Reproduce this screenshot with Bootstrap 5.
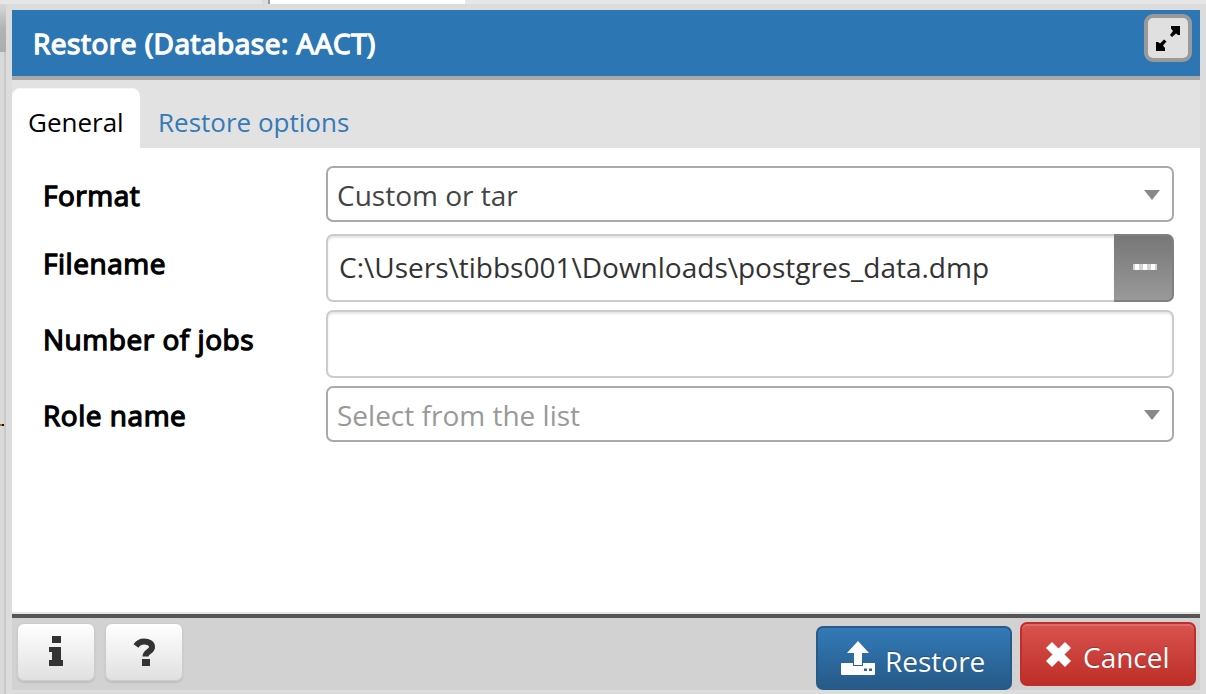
<!DOCTYPE html>
<html lang="en">
<head>
<meta charset="utf-8">
<meta name="viewport" content="width=device-width, initial-scale=1">
<title>Restore (Database: AACT)</title>
<link href="https://cdn.jsdelivr.net/npm/bootstrap@5.3.0/dist/css/bootstrap.min.css" rel="stylesheet">
<style>
body{height:694px;background:#d9d9d9;font-family:"Open Sans",sans-serif;font-size:28px;line-height:38px;color:#444}
.backstrip{height:4px;background:#e6e6e6}
.seg-a{width:262px}
.seg-b{width:8px;background:#dcdcdc;border-right:2px solid #999}
.seg-c{width:195px;background:#fff}
.gutter{width:6px;background:linear-gradient(90deg,#d9d9d9 4px,#c8c8c8 4px)}
.gutter-top{height:48px;background:linear-gradient(#d8d8d8,#b3b3b3 24px,#adadad)}
.tick{margin-top:372px;height:2px;width:4px;background:#111;border-left:2px solid #b36a1c}
.dialog{border:6px solid #dcdcdc;border-bottom-width:4px;height:690px}
.titlebar{height:70px;background:#2c76b4;border-bottom:4px solid #a9a9a9;padding:4px 8px 0 21px}
.titlebar h1{font-size:28px;line-height:58px;letter-spacing:.52px;color:#fff;-webkit-text-stroke:1.4px #fff}
.max-btn{width:48px;height:48px;border:4px solid #999;border-radius:9px;background:#e0e0e0}
.tabs{height:68px;background:#e2e2e2;padding-top:8px;font-size:26px}
.tabs .nav-link{height:60px;padding:15px 16px 0;line-height:38px;color:#337ab7;border:0}
.tabs .nav-link.active{width:128px;background:#fff;color:#000;border-radius:8px 8px 0 0;border-top:1px solid #f5f5f5;padding-top:14px}
.tabs .nav-link + .nav-link{padding-left:18px}
.pane{background:#fff;padding:18px 26px 0 31px;border-bottom:2px solid #e5e5e5}
.field-label{width:283px;padding-top:10px;color:#000;letter-spacing:.53px;-webkit-text-stroke:1.3px #000}
.box{border:2px solid #ccc;border-radius:7px;background:#fff}
.pick{height:56px;border-color:#aaa;padding:2px 12px 0 9px}
.entry{height:68px;box-shadow:inset 0 2px 2px rgba(0,0,0,.1);color:#333}
.browse{width:60px;height:68px;border:2px solid #808080;border-left:0;border-radius:0 7px 7px 0;background:linear-gradient(#777,#999)}
.file-entry{border-right:0;border-radius:7px 0 0 7px;padding:0 0 2px 11px}
.hint{color:#999}
.footbar{height:76px;background:#d2d2d2;border-top:4px solid #555;padding:4px 4px 0 5px}
.tool{width:78px;height:58px;margin:1px 10px 0 0;border:1px solid #ccc;border-radius:7px;background:linear-gradient(#fff,#e0e0e0);box-shadow:0 2px 2px rgba(0,0,0,.09)}
.act{border-radius:7px;color:#fff!important;font-size:28px;line-height:38px;text-shadow:0 -1px 1px rgba(0,0,0,.25)}
.act-restore{width:196px;height:64px;margin-top:4px;padding:6px 0 0 22px;gap:9px;border:2px solid #265a88;background:linear-gradient(#337ab7,#265a88)}
.act-cancel{width:176px;height:64px;padding:6px 0 0 23px;gap:11px;border:2px solid #c12e2a;background:linear-gradient(#d9534f,#be2e28);box-shadow:inset 0 2px 0 rgba(255,255,255,.15)}
.act svg{margin-top:-5px}
</style>
</head>
<body class="overflow-hidden">
<div class="backstrip d-flex"><div class="seg-a"></div><div class="seg-b"></div><div class="seg-c"></div></div>
<div class="d-flex">
  <div class="gutter flex-shrink-0"><div class="gutter-top"></div><div class="tick"></div></div>
  <main class="dialog d-flex flex-column flex-grow-1">
    <header class="titlebar d-flex justify-content-between align-items-start flex-shrink-0">
      <h1 class="m-0">Restore (Database: AACT)</h1>
      <button class="max-btn btn p-0 d-flex" aria-label="Maximize"><svg width="40" height="40" viewBox="0 0 40 40"><path d="M23 8h9v9h-2l-2-1.500-4 3.500-2-2 3-4-2-2.500zM8 24h2l2 1.500 4-4 2.500 2-3.500 4 2 2.500v3H8z"/></svg></button>
    </header>
    <nav class="tabs nav flex-nowrap flex-shrink-0">
      <a class="nav-link active text-nowrap">General</a>
      <a class="nav-link text-nowrap">Restore options</a>
    </nav>
    <section class="pane flex-grow-1">
      <div class="d-flex pb-1 mb-2"><div class="field-label"><span>Format</span></div>
        <div class="box pick flex-grow-1 d-flex align-items-center justify-content-between"><span>Custom or tar</span><svg width="16" height="10"><path d="M0 0h16L8 10z" fill="#888"/></svg></div></div>
      <div class="d-flex mb-2"><div class="field-label"><span>Filename</span></div>
        <div class="box entry file-entry flex-grow-1 d-flex align-items-center"><span>C:\Users\tibbs001\Downloads\postgres_data.dmp</span></div>
        <button class="browse btn p-0 d-flex align-items-center justify-content-center" aria-label="Browse"><svg class="ms-1" width="24" height="8"><path d="M0 0h24v6H0z" fill="#d4d4d4"/><path d="M2 0h4v6H2zM10 0h4v6h-4zM18 0h4v6h-4z" fill="#fff"/></svg></button></div>
      <div class="d-flex mb-2"><div class="field-label"><span>Number of jobs</span></div><div class="box entry flex-grow-1"></div></div>
      <div class="d-flex"><div class="field-label"><span>Role name</span></div>
        <div class="box pick flex-grow-1 d-flex align-items-center justify-content-between"><span class="hint">Select from the list</span><svg width="16" height="10"><path d="M0 0h16L8 10z" fill="#888"/></svg></div></div>
    </section>
    <footer class="footbar d-flex align-items-start flex-shrink-0">
      <button class="tool btn p-0 d-flex justify-content-center align-items-center" aria-label="Info"><svg width="16" height="32"><path d="M4 0h9v7H4zM1 11h12v13h2v6H1v-6h3v-8H1z" fill="#333"/></svg></button>
      <button class="tool btn p-0 me-auto d-flex justify-content-center align-items-center" aria-label="Help"><svg width="24" height="32"><path d="M4 10C6 7 9 5.500 12 5.500c5 0 8 2 8 5.500 0 5-6.500 4-6.500 9.500" fill="none" stroke="#333" stroke-width="6"/><path d="M10 23h8v7h-8z" fill="#333"/></svg></button>
      <button class="act act-restore btn d-flex align-items-center"><svg width="36" height="36"><path d="M18 0l11 12h-7v12h-8V12H7zM1 22h12v3h10v-3h12v11q0 1-1 1H2q-1 0-1-1z" fill="#fff"/><path d="M24 27.500h3v2.500h-3zM29 27.500h3v2.500h-3z" fill="#2b6599"/></svg><span>Restore</span></button>
      <button class="act act-cancel btn d-flex align-items-center ms-2"><svg width="27" height="27"><path d="M4 4l19 19M23 4L4 23" stroke="#fff" stroke-width="8.500"/></svg><span>Cancel</span></button>
    </footer>
  </main>
</div>
<script src="https://cdn.jsdelivr.net/npm/bootstrap@5.3.0/dist/js/bootstrap.bundle.min.js"></script>
</body>
</html>
